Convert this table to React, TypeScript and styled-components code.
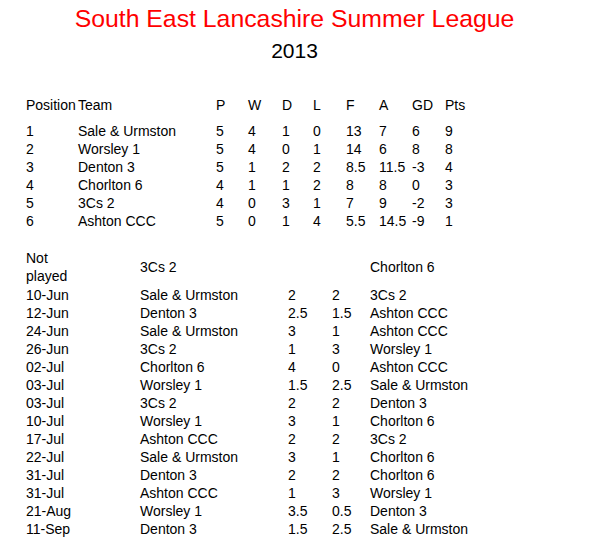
import React from 'react';
import styled, { createGlobalStyle } from 'styled-components';

const GlobalStyle = createGlobalStyle`
  body {
    margin: 0;
    background: #fff;
    font-family: "Liberation Sans", Arial, sans-serif;
    color: #000;
  }
`;

const STANDINGS: string[][] = [
  ['1', 'Sale & Urmston', '5', '4', '1', '0', '13', '7', '6', '9'],
  ['2', 'Worsley 1', '5', '4', '0', '1', '14', '6', '8', '8'],
  ['3', 'Denton 3', '5', '1', '2', '2', '8.5', '11.5', '-3', '4'],
  ['4', 'Chorlton 6', '4', '1', '1', '2', '8', '8', '0', '3'],
  ['5', '3Cs 2', '4', '0', '3', '1', '7', '9', '-2', '3'],
  ['6', 'Ashton CCC', '5', '0', '1', '4', '5.5', '14.5', '-9', '1'],
];

const FIXTURES: string[][] = [
  ['10-Jun', 'Sale & Urmston', '2', '2', '3Cs 2'],
  ['12-Jun', 'Denton 3', '2.5', '1.5', 'Ashton CCC'],
  ['24-Jun', 'Sale & Urmston', '3', '1', 'Ashton CCC'],
  ['26-Jun', '3Cs 2', '1', '3', 'Worsley 1'],
  ['02-Jul', 'Chorlton 6', '4', '0', 'Ashton CCC'],
  ['03-Jul', 'Worsley 1', '1.5', '2.5', 'Sale & Urmston'],
  ['03-Jul', '3Cs 2', '2', '2', 'Denton 3'],
  ['10-Jul', 'Worsley 1', '3', '1', 'Chorlton 6'],
  ['17-Jul', 'Ashton CCC', '2', '2', '3Cs 2'],
  ['22-Jul', 'Sale & Urmston', '3', '1', 'Chorlton 6'],
  ['31-Jul', 'Denton 3', '2', '2', 'Chorlton 6'],
  ['31-Jul', 'Ashton CCC', '1', '3', 'Worsley 1'],
  ['21-Aug', 'Worsley 1', '3.5', '0.5', 'Denton 3'],
  ['11-Sep', 'Denton 3', '1.5', '2.5', 'Sale & Urmston'],
];

const Page = styled.div`
  width: 593px;
  padding: 4px 0 0 26px;
  box-sizing: border-box;
`;

const Heading = styled.div`
  width: 537px;
  text-align: center;
`;

const Title = styled.div`
  color: #ff0000;
  font-size: 24.8px;
  line-height: 30px;
`;

const Year = styled.div`
  font-size: 21px;
  line-height: 26px;
  margin-top: 4px;
`;

const LeagueTable = styled.div`
  margin-top: 32px;
  font-size: 14px;
`;

const LeagueRow = styled.div<{ $head?: boolean }>`
  display: grid;
  grid-template-columns: 52px 138px 32px 34px 31px 33px 33px 33px 33px 40px;
  height: 18px;
  line-height: 18px;
  white-space: nowrap;
  margin-bottom: ${p => (p.$head ? '8px' : '0')};
`;

const Fixtures = styled.div`
  margin-top: 19px;
  font-size: 14px;
`;

const FixtureRow = styled.div<{ $tall?: boolean }>`
  display: grid;
  grid-template-columns: 114px 148px 44px 38px 160px;
  align-items: center;
  height: ${p => (p.$tall ? '36px' : '18px')};
  line-height: 18px;
  white-space: nowrap;
  margin-bottom: ${p => (p.$tall ? '1px' : '0')};
`;

export default function App() {
  return (
    <Page>
      <GlobalStyle />
      <Heading>
        <Title>South East Lancashire Summer League</Title>
        <Year>2013</Year>
      </Heading>
      <LeagueTable>
        <LeagueRow $head>
          {['Position', 'Team', 'P', 'W', 'D', 'L', 'F', 'A', 'GD', 'Pts'].map(h => (
            <span key={h}>{h}</span>
          ))}
        </LeagueRow>
        {STANDINGS.map(row => (
          <LeagueRow key={row[0]}>
            {row.map((cell, i) => (
              <span key={i}>{cell}</span>
            ))}
          </LeagueRow>
        ))}
      </LeagueTable>
      <Fixtures>
        <FixtureRow $tall>
          <span>
            Not
            <br />
            played
          </span>
          <span>3Cs 2</span>
          <span />
          <span />
          <span>Chorlton 6</span>
        </FixtureRow>
        {FIXTURES.map((row, r) => (
          <FixtureRow key={r}>
            {row.map((cell, i) => (
              <span key={i}>{cell}</span>
            ))}
          </FixtureRow>
        ))}
      </Fixtures>
    </Page>
  );
}
